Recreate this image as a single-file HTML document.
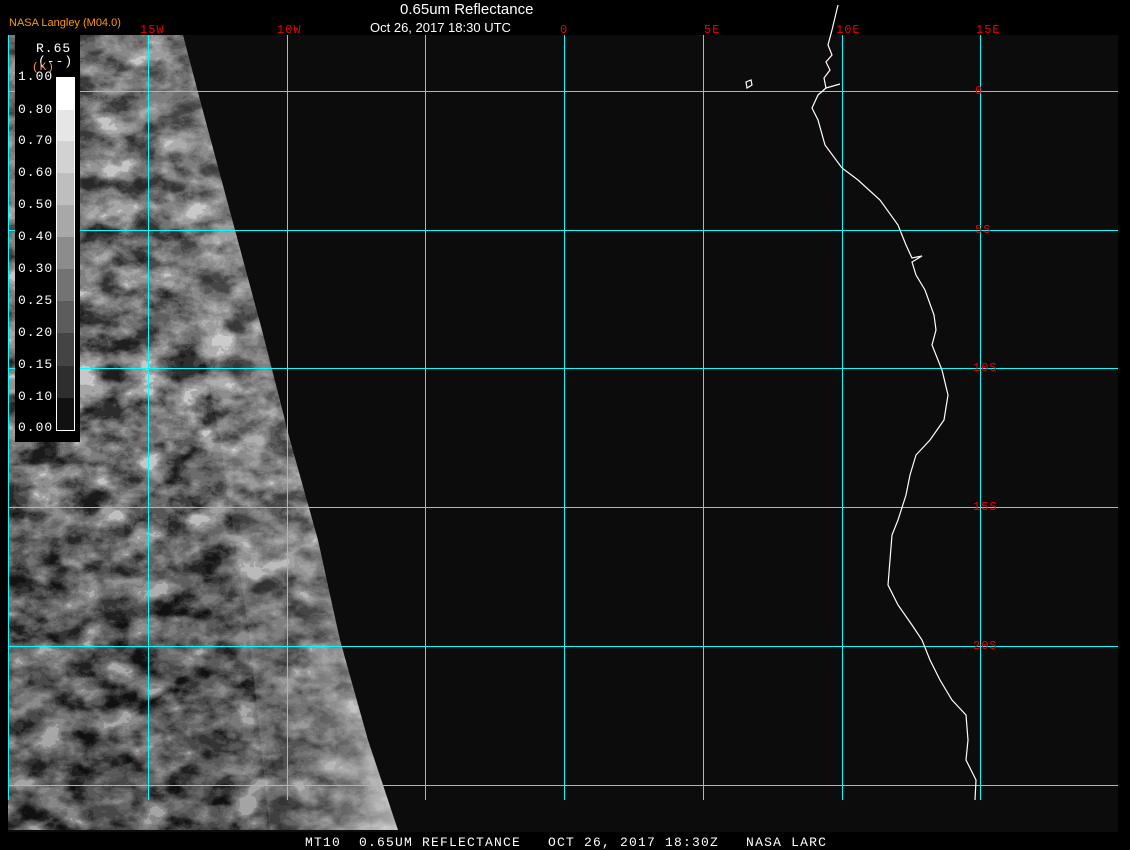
<!DOCTYPE html>
<html><head><meta charset="utf-8"><style>
html,body{margin:0;padding:0;background:#000;width:1130px;height:850px;overflow:hidden}
body{position:relative;font-family:"Liberation Mono","DejaVu Sans Mono",monospace}
.t{position:absolute;white-space:pre}
</style></head><body>
<svg width="1130" height="850" style="position:absolute;left:0;top:0">
<defs>
<filter id="n" x="0" y="0" width="100%" height="100%" color-interpolation-filters="sRGB">
<feTurbulence type="fractalNoise" baseFrequency="0.03 0.045" numOctaves="5" seed="11" result="t"/>
<feComponentTransfer in="t" result="s"><feFuncR type="linear" slope="3.2" intercept="-1.1"/><feFuncG type="linear" slope="3.2" intercept="-1.1"/><feFuncB type="linear" slope="3.2" intercept="-1.1"/><feFuncA type="linear" slope="0" intercept="1"/></feComponentTransfer>
<feColorMatrix in="s" type="matrix" values="0.3 0.5 0.2 0 0  0.3 0.5 0.2 0 0  0.3 0.5 0.2 0 0  0 0 0 1 0" result="m"/>
<feComponentTransfer in="m"><feFuncR type="discrete" tableValues="0.08 0.15 0.25 0.35 0.43 0.5 0.58 0.66 0.8"/><feFuncG type="discrete" tableValues="0.08 0.15 0.25 0.35 0.43 0.5 0.58 0.66 0.8"/><feFuncB type="discrete" tableValues="0.08 0.15 0.25 0.35 0.43 0.5 0.58 0.66 0.8"/></feComponentTransfer>
</filter>
<linearGradient id="edge" x1="0" x2="1" y1="0" y2="0">
<stop offset="0" stop-color="#fff" stop-opacity="0"/><stop offset="0.7" stop-color="#ddd" stop-opacity="0.2"/><stop offset="1" stop-color="#fff" stop-opacity="0.6"/></linearGradient>
<linearGradient id="v" x1="0" x2="0" y1="0" y2="1">
<stop offset="0" stop-color="#aaa" stop-opacity="0.2"/><stop offset="0.5" stop-color="#888" stop-opacity="0.05"/><stop offset="0.7" stop-color="#000" stop-opacity="0.15"/><stop offset="1" stop-color="#000" stop-opacity="0.2"/></linearGradient>
<clipPath id="c"><polygon points="8,35 183,35 200,100 235,230 262,330 290,440 318,540 340,640 368,740 398,830 8,830"/></clipPath>
</defs>
<rect x="8" y="35" width="1110" height="797" fill="#0c0c0c"/>
<g clip-path="url(#c)">
<rect x="8" y="35" width="400" height="797" filter="url(#n)"/>
<rect x="8" y="35" width="400" height="797" fill="url(#v)"/>
<polygon points="110,35 183,35 200,100 235,230 262,330 290,440 318,540 340,640 368,740 398,830 270,830 250,640 220,440 180,230 140,100" fill="url(#edge)"/>
</g>
<g stroke-width="1" fill="none" stroke="#0ff">
<line x1="8.5" y1="35" x2="8.5" y2="800"/>
<line x1="148.5" y1="35" x2="148.5" y2="800"/>
<line x1="287.5" y1="35" x2="287.5" y2="800"/>
<line x1="425.5" y1="35" x2="425.5" y2="800"/>
<line x1="564.5" y1="35" x2="564.5" y2="800"/>
<line x1="703.5" y1="35" x2="703.5" y2="800"/>
<line x1="842.5" y1="35" x2="842.5" y2="800"/>
<line x1="980.5" y1="35" x2="980.5" y2="800"/>
<line x1="8" y1="91.5" x2="1118" y2="91.5"/>
<line x1="8" y1="230.5" x2="1118" y2="230.5"/>
<line x1="8" y1="368.5" x2="1118" y2="368.5"/>
<line x1="8" y1="507.5" x2="1118" y2="507.5"/>
<line x1="8" y1="646.5" x2="1118" y2="646.5"/>
<line x1="8" y1="785.5" x2="1118" y2="785.5"/>
</g>
<g stroke="#fff" stroke-width="1.2" fill="none">
<path d="M838,5 L832,30 L828,45 L832,55 L826,62 L830,70 L824,78 L826,88 L818,95 L812,108 L818,120 L825,145 L842,168 L858,180 L880,200 L898,225 L906,245 L912,258 L922,256 L912,262 L916,275 L925,290 L934,315 L936,330 L932,345 L942,370 L948,395 L944,420 L930,440 L916,455 L910,475 L906,495 L898,520 L892,535 L890,560 L888,585 L898,605 L912,625 L922,640 L930,660 L940,680 L952,700 L966,715 L968,740 L966,760 L976,780 L975,800"/>
<path d="M826,88 L840,84"/>
<path d="M746,82 L751,80 L752,85 L747,88 Z"/>
</g>
<rect x="15" y="35" width="65" height="407" fill="#000"/>
<g>
<rect x="56" y="77" width="19" height="33" fill="#fff"/>
<rect x="56" y="110" width="19" height="31" fill="#e6e6e6"/>
<rect x="56" y="141" width="19" height="32" fill="#d2d2d2"/>
<rect x="56" y="173" width="19" height="32" fill="#bebebe"/>
<rect x="56" y="205" width="19" height="32" fill="#a8a8a8"/>
<rect x="56" y="237" width="19" height="32" fill="#8c8c8c"/>
<rect x="56" y="269" width="19" height="32" fill="#737373"/>
<rect x="56" y="301" width="19" height="32" fill="#5c5c5c"/>
<rect x="56" y="333" width="19" height="33" fill="#444"/>
<rect x="56" y="366" width="19" height="32" fill="#2e2e2e"/>
<rect x="56" y="398" width="19" height="32" fill="#111"/>
<rect x="56.5" y="77.5" width="18" height="353" fill="none" stroke="#fff"/>
</g>
</svg>
<div class="t" style="left:400px;top:1px;color:#fff;font:15px 'Liberation Sans',sans-serif">0.65um Reflectance</div>
<div class="t" style="left:370px;top:20px;color:#fff;font:13px 'Liberation Sans',sans-serif">Oct 26, 2017 18:30 UTC</div>
<div class="t" style="left:9px;top:17px;color:#f90;font:11px 'Liberation Sans',sans-serif">NASA Langley (M04.0)</div>
<div style="position:absolute;left:0;top:0;color:#e00;font-size:12px;letter-spacing:1px">
<span class="t" style="left:140px;top:23px">15W</span>
<span class="t" style="left:277px;top:23px">10W</span>
<span class="t" style="left:560px;top:23px">0</span>
<span class="t" style="left:704px;top:23px">5E</span>
<span class="t" style="left:836px;top:23px">10E</span>
<span class="t" style="left:976px;top:23px">15E</span>
<span class="t" style="left:975px;top:84px">0</span>
<span class="t" style="left:975px;top:223px">5S</span>
<span class="t" style="left:973px;top:361px">10S</span>
<span class="t" style="left:973px;top:500px">15S</span>
<span class="t" style="left:973px;top:639px">20S</span>
</div>
<div style="position:absolute;left:0;top:0;color:#fff;font-size:13px;letter-spacing:1px">
<span class="t" style="left:36px;top:41px">R.65</span>
<span class="t" style="left:38px;top:54px">(--)</span>
<span class="t" style="left:32px;top:62px;color:#f96;font-size:11px">(K)</span>
<span class="t" style="left:18px;top:69px">1.00</span>
<span class="t" style="left:18px;top:102px">0.80</span>
<span class="t" style="left:18px;top:133px">0.70</span>
<span class="t" style="left:18px;top:165px">0.60</span>
<span class="t" style="left:18px;top:197px">0.50</span>
<span class="t" style="left:18px;top:229px">0.40</span>
<span class="t" style="left:18px;top:261px">0.30</span>
<span class="t" style="left:18px;top:293px">0.25</span>
<span class="t" style="left:18px;top:325px">0.20</span>
<span class="t" style="left:18px;top:357px">0.15</span>
<span class="t" style="left:18px;top:389px">0.10</span>
<span class="t" style="left:18px;top:420px">0.00</span>
</div>
<div class="t" style="left:305px;top:835px;color:#fff;font-size:13px;letter-spacing:1.2px">MT10  0.65UM REFLECTANCE   OCT 26, 2017 18:30Z   NASA LARC</div>
</body></html>
